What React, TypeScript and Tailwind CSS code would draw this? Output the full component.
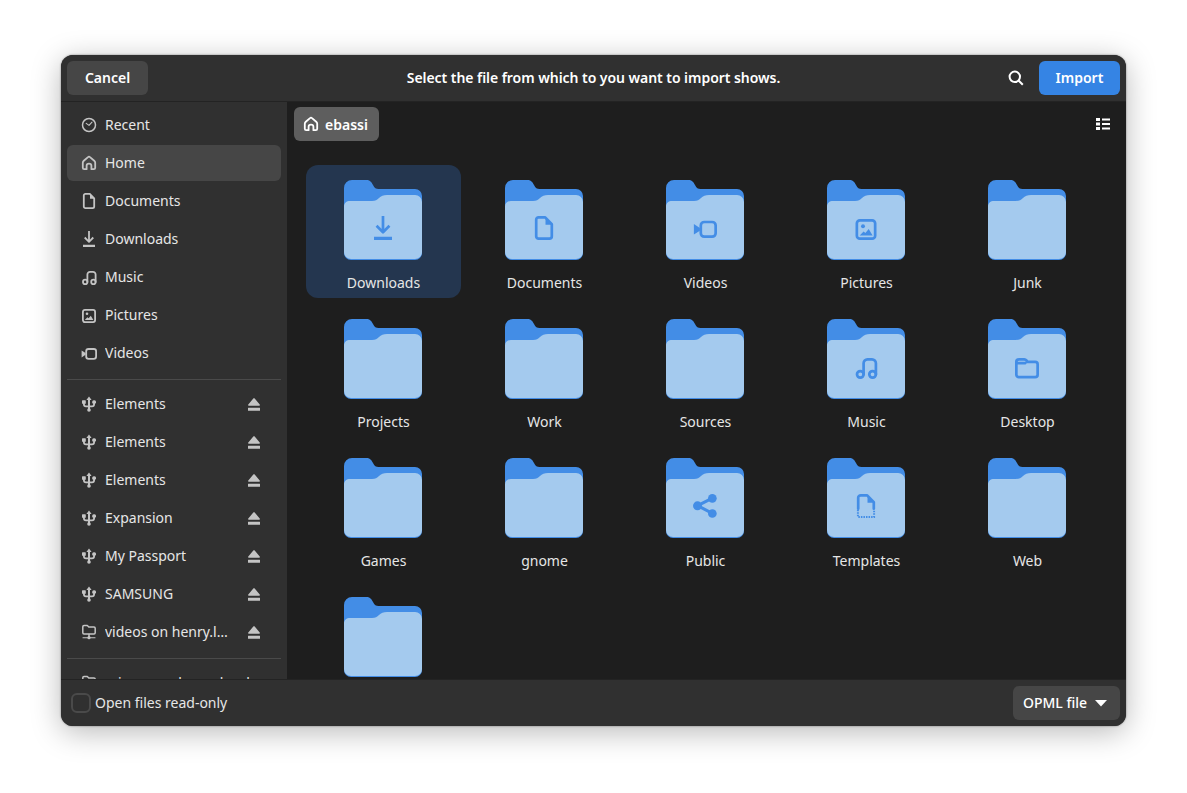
const sans = "font-['Noto_Sans',sans-serif]";

type G = { name: string };

function Glyph({ name, className }: G & { className?: string }) {
  const s = { fill: "none", stroke: "currentColor", strokeWidth: 1.8, strokeLinecap: "round" as const, strokeLinejoin: "round" as const };
  const f = { fill: "currentColor" };
  let c: React.ReactNode = null;
  switch (name) {
    case "recent":
      c = (<><circle cx="8" cy="8" r="6.5" {...s} strokeWidth={1.5} /><path d="M5.2 6.4 8 8.4l3-3.2" {...s} strokeWidth={1.1} /></>);
      break;
    case "home":
      c = (<path d="M8 1.700c-.4 0-.7.1-1 .4L2.800 5.800c-.7.6-1 1.200-1 2v5c0 .8.6 1.400 1.400 1.400h2.400v-3.400c0-1.200 1-2.200 2.400-2.200s2.400 1 2.400 2.200v3.400h2.400c.8 0 1.400-.6 1.400-1.400v-5c0-.8-.3-1.400-1-2L9 2.100c-.3-.3-.6-.4-1-.4Z" {...s} />);
      break;
    case "document":
      c = (<><path d="M4.400 .9h4.400l4.400 4.500v8.100c0 .9-.7 1.600-1.600 1.600H4.400c-.9 0-1.600-.7-1.600-1.600V2.500c0-.9.7-1.600 1.600-1.600Z" {...s} /><path d="M9 1v4.800h4.800" {...f} /></>);
      break;
    case "download":
      c = (<><path d="M8 0v10M3.700 6.500 8 10.800l4.300-4.300" {...s} strokeLinecap="butt" /><path d="M2 13.800h12V16H2z" {...f} /></>);
      break;
    case "music":
      c = (<><circle cx="4.200" cy="12.900" r="2.200" {...s} /><circle cx="12.400" cy="12.900" r="2.200" {...s} /><path d="M6.400 12.900V5.500a2.600 2.600 0 0 1 2.600-2.600h3a2.600 2.600 0 0 1 2.600 2.600v7.400" {...s} /></>);
      break;
    case "pictures":
      c = (<><rect x="1.900" y="2.900" width="12.200" height="12.200" rx="2" {...s} /><circle cx="6" cy="6.800" r="1.300" {...f} /><path d="M3.800 13 6.400 10.300l1.200 1 2.200-2.600 2.600 4.300Z" {...f} /></>);
      break;
    case "videos":
      c = (<><rect x="5.200" y="4" width="9.900" height="9.800" rx="2.300" {...s} /><path d="M.6 5.400 4.600 8v1.800L.6 12.400Z" {...f} /></>);
      break;
    case "folder":
      c = (<path d="M2.800 2.900h3.400c.6 0 1 .2 1.400.7l.8 1h5c.9 0 1.700.7 1.700 1.600v7c0 .9-.8 1.600-1.700 1.600H2.600c-.9 0-1.700-.7-1.700-1.600V4.500c0-.9.8-1.600 1.900-1.600ZM1.400 5.400h5.500" {...s} />);
      break;
    case "share":
      c = (<><path d="M12.900 2.700 3.100 7.800l9.800 5.100" {...s} strokeWidth={2} /><circle cx="12.900" cy="2.900" r="2.900" {...f} /><circle cx="12.900" cy="13" r="2.900" {...f} /><circle cx="3" cy="7.900" r="3" {...f} /></>);
      break;
    case "template":
      c = (<><path d="M2.800 9.800V2.500c0-.9.800-1.600 1.700-1.600h4.300l4.400 4.500v4.400" {...s} /><path d="M9 1v4.800h4.800" {...f} /><path d="M2.600 10.500v4.800h10.800v-4.800" fill="none" stroke="currentColor" strokeWidth={1.300} strokeDasharray="1 .7" /></>);
      break;
    case "usb":
      c = (<><path d="M8 .6 10.600 4H5.400Z" {...f} /><path d="M8 3v10.500" fill="none" stroke="currentColor" strokeWidth={2} /><circle cx="8" cy="14" r="1.800" {...f} /><path d="M2.900 6.800v1.500c0 1.300.8 2.100 2.100 2.100h6c1.300 0 2.100-.8 2.100-2.100V6.800" fill="none" stroke="currentColor" strokeWidth={1.800} /><rect x="1" y="4.300" width="3.800" height="3.500" rx=".6" {...f} /><rect x="11.200" y="4.300" width="3.800" height="3.500" rx="1.500" {...f} /></>);
      break;
    case "eject":
      c = (<><path d="M8 2.300c.3 0 .5.100.7.300l5 5.800c.5.600.2 1.400-.5 1.400H2.800c-.7 0-1-.8-.5-1.400l5-5.800c.2-.2.400-.3.700-.3Z" {...f} /><rect x="2" y="11.700" width="12" height="3" rx=".3" {...f} /></>);
      break;
    case "network":
      c = (<><path d="M3 1.500h3.300l1.500 1.500h5.200c.7 0 1.200.5 1.200 1.200v4.600c0 .7-.5 1.200-1.200 1.200H3c-.7 0-1.200-.5-1.200-1.200V2.700c0-.7.5-1.200 1.200-1.200Z" {...s} strokeWidth={1.500} /><path d="M8 10.500v3" {...s} strokeWidth={1.500} /><path d="M2 13.700h12" {...s} strokeWidth={1.100} /><circle cx="8" cy="13.700" r="1.600" {...f} /></>);
      break;
  }
  return (
    <svg viewBox="0 0 16 16" className={className}>
      {c}
    </svg>
  );
}

function Folder({ glyph }: { glyph?: string }) {
  return (
    <div className="relative w-[78px] h-[80px] mr-[1px]">
      <svg viewBox="0 0 78 80" className="w-[78px] h-[80px] block">
        <path d="M8 0H22C26 0 27.500 2 29 5C30.500 8 32 9 34.500 9H71a7 7 0 0 1 7 7V73a7 7 0 0 1-7 7H7a7 7 0 0 1-7-7V8a8 8 0 0 1 8-8Z" fill="#438de6" />
        <path d="M0 26.500C0 23 2.500 21 6 21H28C31.500 21 33 20 35 18C37 16 39.500 15 43 15H71a7 7 0 0 1 7 7V72a7 7 0 0 1-7 7H7a7 7 0 0 1-7-7Z" fill="#a4caee" />
      </svg>
      {glyph && (
        <div className="absolute left-[27px] top-[36px] w-[24px] h-[24px] text-[#438de6]">
          <Glyph name={glyph} className="w-[24px] h-[24px]" />
        </div>
      )}
    </div>
  );
}

const folders: [string, string?][] = [
  ["Downloads", "download"],
  ["Documents", "document"],
  ["Videos", "videos"],
  ["Pictures", "pictures"],
  ["Junk"],
  ["Projects"],
  ["Work"],
  ["Sources"],
  ["Music", "music"],
  ["Desktop", "folder"],
  ["Games"],
  ["gnome"],
  ["Public", "share"],
  ["Templates", "template"],
  ["Web"],
  [""],
];

function Row({ icon, label, active, eject }: { icon: string; label: string; active?: boolean; eject?: boolean }) {
  return (
    <div className={`h-[36px] shrink-0 rounded-[6px] flex items-center pl-[14px] pr-[19px] ${active ? "bg-[#464646]" : ""}`}>
      <Glyph name={icon} className="w-[16px] h-[16px] shrink-0 text-[#c4c4c4]" />
      <span className="ml-[8px] flex-1 truncate text-[14px] text-[#e6e6e6] leading-[20px]">{label}</span>
      {eject && <Glyph name="eject" className="w-[16px] h-[16px] shrink-0 ml-[16px] text-[#c4c4c4]" />}
    </div>
  );
}

function Sep() {
  return <div className="h-px bg-[#4a4a4a] mt-[6px] mb-[4px] shrink-0" />;
}

export default function App() {
  return (
    <div className={`w-[1187px] h-[793px] bg-white pt-[55px] pl-[61px] overflow-hidden ${sans}`}>
      <div className="w-[1065px] h-[671px] rounded-[12px] bg-[#2f2f2f] overflow-hidden flex flex-col shadow-[0_6px_30px_rgba(0,0,0,0.28),0_0_2px_rgba(0,0,0,0.5)]">
        <header className="h-[47px] shrink-0 flex items-center pl-[6px] pr-[6px] bg-[#303030] border-b border-[#232323]">
          <button className="h-[34px] w-[81px] pb-[2px] rounded-[6px] bg-[#464646] text-[14px] font-semibold text-white">Cancel</button>
          <div className="flex-1 text-center text-[14px] tracking-[-0.05px] font-semibold text-white pl-[31px] pb-[2px]">Select the file from which to you want to import shows.</div>
          <svg viewBox="0 0 16 16" className="w-[16px] h-[16px] mr-[15px] text-white" fill="none" stroke="currentColor">
            <circle cx="6.800" cy="6.800" r="5.200" strokeWidth="2" />
            <path d="m10.500 10.500 4.300 4.300" strokeWidth="2" />
          </svg>
          <button className="h-[34px] w-[81px] pb-[2px] rounded-[6px] bg-[#3584e4] text-[14px] font-semibold text-white">Import</button>
        </header>
        <div className="flex-1 min-h-0 flex">
          <aside className="w-[226px] shrink-0 bg-[#303030] overflow-hidden px-[6px] pt-[5px] flex flex-col gap-[2px]">
            <Row icon="recent" label="Recent" />
            <Row icon="home" label="Home" active />
            <Row icon="document" label="Documents" />
            <Row icon="download" label="Downloads" />
            <Row icon="music" label="Music" />
            <Row icon="pictures" label="Pictures" />
            <Row icon="videos" label="Videos" />
            <Sep />
            {["Elements", "Elements", "Elements", "Expansion", "My Passport", "SAMSUNG"].map((l, i) => (
              <Row key={i} icon="usb" label={l} eject />
            ))}
            <Row icon="network" label="videos on henry.local" eject />
            <Sep />
            <Row icon="network" label="mirrors on henry.local" />
          </aside>
          <main className="flex-1 min-w-0 bg-[#1e1e1e] flex flex-col overflow-hidden">
            <div className="h-[44px] shrink-0 flex items-center justify-between pl-[7px] pr-[15px]">
              <div className="h-[34px] w-[85px] rounded-[6px] bg-[#5e5e5e] flex items-center pl-[9px] gap-[6px]">
                <Glyph name="home" className="w-[16px] h-[16px] text-white" />
                <span className="text-[14px] font-semibold text-white">ebassi</span>
              </div>
              <svg viewBox="0 0 16 16" className="w-[16px] h-[16px] text-white" fill="currentColor">
                <rect x="1" y="2" width="4" height="3" />
                <rect x="1" y="6.500" width="4" height="3" />
                <rect x="1" y="11" width="4" height="3" />
                <rect x="7" y="2.500" width="8" height="2" />
                <rect x="7" y="7" width="8" height="2" />
                <rect x="7" y="11.500" width="8" height="2" />
              </svg>
            </div>
            <div className="flex-1 min-h-0 overflow-hidden pl-[19px] pt-[19px] grid grid-cols-[repeat(5,155px)] auto-rows-[133px] gap-[6px] content-start">
              {folders.map(([label, g], i) => (
                <div key={i} className={`w-[155px] h-[133px] rounded-[12px] flex flex-col items-center pt-[15px] ${i === 0 ? "bg-[#24364f]" : ""}`}>
                  <Folder glyph={g} />
                  <span className="mt-[13px] text-[14px] leading-[20px] text-[#e6e6e6]">{label}</span>
                </div>
              ))}
            </div>
          </main>
        </div>
        <footer className="h-[47px] shrink-0 bg-[#303030] border-t border-[#232323] flex items-center justify-between pl-[10px] pr-[6px]">
          <div className="flex items-center gap-[4px]">
            <div className="w-[20px] h-[20px] rounded-[6px] border-2 border-[#4a4a4a]" />
            <span className="text-[14px] text-[#e6e6e6] pb-[2px]">Open files read-only</span>
          </div>
          <div className="h-[34px] w-[107px] rounded-[6px] bg-[#464646] flex items-center pl-[10px] gap-[8px]">
            <span className="text-[14px] font-medium text-white pb-[2px]">OPML file</span>
            <svg viewBox="0 0 12 7" className="w-[12px] h-[7px] text-white" fill="currentColor"><path d="M0 0h12L6 6.500Z" /></svg>
          </div>
        </footer>
      </div>
    </div>
  );
}
